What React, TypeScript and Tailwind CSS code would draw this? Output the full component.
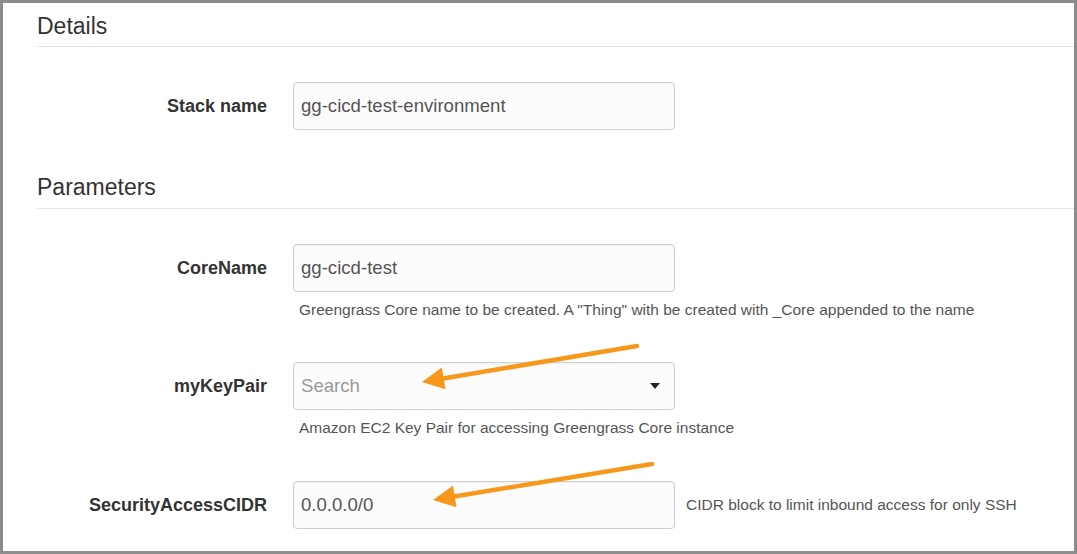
import React from 'react';

const font = { fontFamily: '"Liberation Sans", Arial, sans-serif' };

const Field: React.FC<{ label: string; children: React.ReactNode; className?: string }> = ({ label, children, className }) => (
  <div className={`flex items-start ${className ?? ''}`}>
    <div className="w-[230px] h-[48px] flex items-center justify-end text-[18px] font-bold text-[#333]">{label}</div>
    <div className="ml-[26px]">{children}</div>
  </div>
);

const Input: React.FC<{ value?: string; placeholder?: string; select?: boolean }> = ({ value, placeholder, select }) => (
  <div className="w-[382px] h-[48px] rounded-[4px] border border-[#cfcfcf] bg-[#fcfcfc] shadow-[inset_0_1px_2px_rgba(0,0,0,0.06)] flex items-center pl-[7px] pr-[14px] text-[18.6px]">
    <span className={value ? 'text-[#555]' : 'text-[#999]'}>{value ?? placeholder}</span>
    {select && (
      <svg className="ml-auto" width="10" height="6" viewBox="0 0 10 6"><path d="M0 0h10L5 6z" fill="#222" /></svg>
    )}
  </div>
);

const Help: React.FC<{ children: React.ReactNode }> = ({ children }) => (
  <div className="mt-[8px] text-[15.5px] leading-[20px] text-[#555] pl-[6px]">{children}</div>
);

// orange annotation arrow, tip at (x2, y2)
const Arrow: React.FC<{ x1: number; y1: number; x2: number; y2: number }> = ({ x1, y1, x2, y2 }) => {
  const dx = x2 - x1, dy = y2 - y1;
  const len = Math.hypot(dx, dy);
  const ux = dx / len, uy = dy / len;
  const hl = 22, hw = 11;
  const bx = x2 - ux * hl, by = y2 - uy * hl;
  const px = -uy, py = ux;
  return (
    <g>
      <line x1={x1} y1={y1} x2={bx + ux * 2} y2={by + uy * 2} stroke="#f7981d" strokeWidth="4.5" strokeLinecap="round" />
      <polygon points={`${x2},${y2} ${bx + px * hw},${by + py * hw} ${bx - px * hw},${by - py * hw}`} fill="#f7981d" />
    </g>
  );
};

export default function App() {
  return (
    <div className="w-[1077px] h-[554px] bg-white" style={font}>
      <div className="relative w-[1077px] h-[554px] border-[3px] border-[#8c8c8c] pl-[34px]">
        <div className="mt-[9px] pb-[6px] border-b border-[#e3e3e3] text-[23px] leading-[28px] text-[#333]">Details</div>

        <Field label="Stack name" className="mt-[35px]">
          <Input value="gg-cicd-test-environment" />
        </Field>

        <div className="mt-[43px] pb-[7px] border-b border-[#e3e3e3] text-[23px] leading-[28px] text-[#333]">Parameters</div>

        <Field label="CoreName" className="mt-[35px]">
          <Input value="gg-cicd-test" />
          <Help>Greengrass Core name to be created. A "Thing" with be created with _Core appended to the name</Help>
        </Field>

        <Field label="myKeyPair" className="mt-[42px]">
          <Input placeholder="Search" select />
          <Help>Amazon EC2 Key Pair for accessing Greengrass Core instance</Help>
        </Field>

        <Field label="SecurityAccessCIDR" className="mt-[43px]">
          <div className="flex items-center">
            <Input value="0.0.0.0/0" />
            <span className="ml-[11px] text-[15.5px] text-[#555]">CIDR block to limit inbound access for only SSH</span>
          </div>
        </Field>

        <svg className="absolute left-[-3px] top-[-3px] pointer-events-none" width="1077" height="554">
          <Arrow x1={637} y1={346} x2={422} y2={382} />
          <Arrow x1={652} y1={464} x2={433} y2={500} />
        </svg>
      </div>
    </div>
  );
}
